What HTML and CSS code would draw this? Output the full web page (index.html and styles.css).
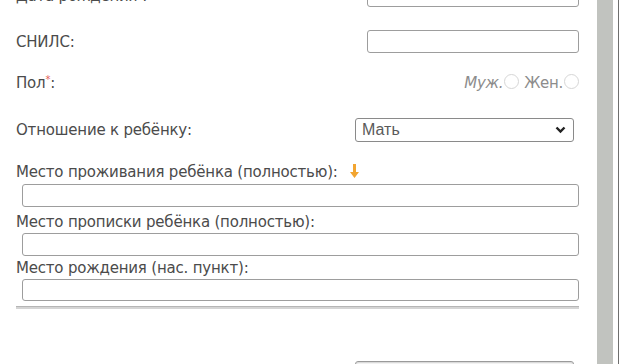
FILE: index.html
```html
<!DOCTYPE html>
<html lang="ru">
<head>
  <meta charset="UTF-8" />
  <title>Анкета родителя</title>
  <link rel="stylesheet" href="styles.css">
</head>
<body>
  <div class="window">
    <div class="page">
      <div class="form">
        <div class="row row-first">
          <label>Дата рождения<span class="req">*</span>:</label>
          <input type="text" class="short">
        </div>

        <div class="row row-snils">
          <label>СНИЛС:</label>
          <input type="text" class="short">
        </div>

        <div class="row row-sex">
          <label>Пол<span class="req">*</span>:</label>
          <div class="sex">
            <span class="male">Муж.</span><span class="radio"></span>
            <span class="female">Жен.</span><span class="radio"></span>
          </div>
        </div>

        <div class="row row-rel">
          <label>Отношение к ребёнку:</label>
          <div class="select">
            <span>Мать</span>
            <svg width="11" height="8" viewBox="0 0 11 8"><path d="M1.5 1.5 L5.5 5.5 L9.5 1.5" fill="none" stroke="#222" stroke-width="2.4"/></svg>
          </div>
        </div>

        <div class="block block-live">
          <label>Место проживания ребёнка (полностью):<svg class="arrow" width="9" height="14" viewBox="0 0 9 14"><path d="M3 0 H6 V8 H9 L4.5 14 L0 8 H3 Z" fill="#f2a531"/></svg></label>
          <input type="text" class="wide">
        </div>

        <div class="block block-reg">
          <label>Место прописки ребёнка (полностью):</label>
          <input type="text" class="wide">
        </div>

        <div class="block block-birth">
          <label>Место рождения (нас. пункт):</label>
          <input type="text" class="wide">
        </div>

        <div class="rule"></div>

        <div class="row row-last">
          <div class="select"></div>
        </div>
      </div>
    </div>
    <div class="scroll"></div>
    <div class="edge"></div>
  </div>
</body>
</html>
```

FILE: styles.css
```css
html, body {
  margin: 0;
  height: 100%;
  overflow: hidden;
  background: #fff;
}
body {
  font-family: "DejaVu Sans", Verdana, sans-serif;
  font-size: 15px;
  color: #4b4b4b;
}
.window {
  display: flex;
  height: 100%;
}
.page {
  width: 597px;
}
.scroll {
  width: 16px;
  background: #c1c3bf;
}
.edge {
  width: 1px;
  margin-left: 5px;
  background: #6f6f6f;
}
.form {
  margin-top: -16px;
  padding-left: 16px;
  width: 563px;
}
label {
  letter-spacing: -0.2px;
}
.row {
  display: flex;
  align-items: center;
  justify-content: space-between;
  height: 23px;
}
.row-first { margin-bottom: 23px; }
.row-snils { margin-bottom: 18px; }
.row-sex { margin-bottom: 24px; }
.row-rel {
  height: 24px;
  margin-bottom: 22px;
}
input {
  box-sizing: border-box;
  height: 23px;
  border: 1px solid #9d9d9d;
  border-radius: 3px;
  background: #fff;
  margin: 0;
}
input.short {
  width: 212px;
}
.block label {
  display: block;
  height: 16px;
  line-height: 16px;
}
input.wide {
  display: block;
  width: 557px;
  margin-left: 6px;
  margin-top: 4px;
}
.req {
  color: #e25a5a;
  font-size: 10px;
  vertical-align: 5px;
}
.sex {
  display: flex;
  align-items: center;
  color: #8c8c8c;
  letter-spacing: -0.3px;
}
.sex .male {
  font-style: italic;
}
.sex .female {
  margin-left: 5px;
}
.radio {
  width: 13px;
  height: 13px;
  border: 1px solid #d6d6d6;
  border-radius: 50%;
  margin-left: 1px;
  margin-top: -3px;
}
.select {
  box-sizing: border-box;
  width: 219px;
  height: 24px;
  margin-right: 5px;
  border: 1px solid #8a8a8a;
  border-radius: 3px;
  display: flex;
  align-items: center;
  justify-content: space-between;
  padding: 0 7px 0 6px;
  color: #5a5a5a;
  font-family: "Liberation Sans", Arial, sans-serif;
  font-size: 16px;
}
.block-reg {
  margin-top: 7px;
}
.block-birth {
  margin-top: 4px;
}
.block-reg input, .block-birth input {
  margin-top: 3px;
}
.block-birth input {
  height: 22px;
}
.arrow {
  vertical-align: -1px;
  margin-left: 12px;
}
.rule {
  margin-top: 5px;
  height: 3px;
  background: #d4d4d4;
  border-top: 1px solid #b5b5b5;
  box-sizing: border-box;
}
.row-last {
  margin-top: 52px;
  justify-content: flex-end;
}
.row-last .select {
  border-color: #9a9a9a;
  box-shadow: inset 0 1px 2px rgba(0, 0, 0, 0.2);
}
```
